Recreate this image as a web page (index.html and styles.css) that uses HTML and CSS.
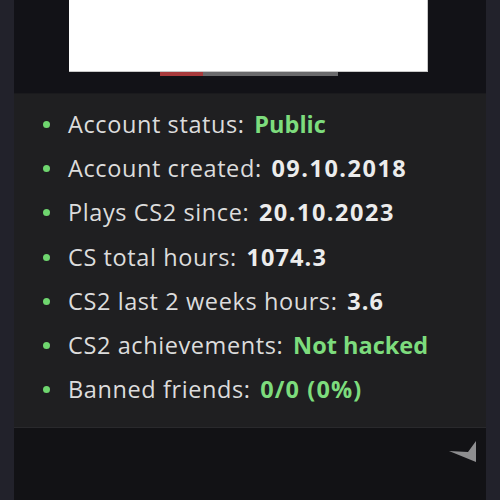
FILE: index.html
```html
<!DOCTYPE html>
<html>
<head>
<meta charset="utf-8">
<link rel="stylesheet" href="styles.css">
</head>
<body>
<div class="frame">
  <div class="top">
    <div class="shot"></div>
    <div class="progress"><span class="fill"></span></div>
  </div>
  <ul class="stats">
    <li><span class="label">Account status:</span> <b class="ok">Public</b></li>
    <li><span class="label">Account created:</span> <b class="date">09.10.2018</b></li>
    <li><span class="label">Plays CS2 since:</span> <b class="date">20.10.2023</b></li>
    <li><span class="label">CS total hours:</span> <b class="num">1074.3</b></li>
    <li><span class="label">CS2 last 2 weeks hours:</span> <b class="num">3.6</b></li>
    <li><span class="label">CS2 achievements:</span> <b class="ok">Not hacked</b></li>
    <li><span class="label">Banned friends:</span> <b class="ok num">0/0 (0%)</b></li>
  </ul>
  <div class="bottom">
    <svg class="corner" width="30" height="24" viewBox="0 0 30 24"><path d="M28 1 L28 22 L1 11 L20 12 Z" fill="#8e8e90"/></svg>
  </div>
</div>
</body>
</html>
```
FILE: styles.css
```css
html, body { margin: 0; padding: 0; }
body {
  width: 500px;
  height: 500px;
  background: #22222b;
  overflow: hidden;
  font-family: "Open Sans", "Noto Sans", sans-serif;
}
.frame {
  margin: 0 14px;
  height: 500px;
  display: flex;
  flex-direction: column;
}
.top {
  height: 93px;
  background: #121217;
  display: flex;
  flex-direction: column;
  padding-left: 55px;
  box-sizing: border-box;
}
.shot {
  width: 359px;
  height: 72px;
  background: #fff;
  border-right: 1px solid #c8c8c8;
  border-bottom: 1px solid #c8c8c8;
  box-sizing: border-box;
}
.progress {
  margin-left: 91px;
  width: 178px;
  height: 4px;
  background: #6b6b6d;
}
.fill {
  display: block;
  width: 43px;
  height: 4px;
  background: #a83a3c;
}
.stats {
  list-style: none;
  margin: 0;
  padding: 14px 0 0 29px;
  height: 334px;
  box-sizing: border-box;
  background: #1f1f21;
  border-top: 1px solid #1a1a1d;
}
.stats li {
  position: relative;
  padding-left: 25px;
  height: 44.2px;
  line-height: 32px;
  font-size: 23.5px;
  color: #dcdcdc;
  letter-spacing: 0.6px;
}
.stats li::before {
  content: "";
  position: absolute;
  left: 0;
  top: 13px;
  width: 7px;
  height: 7px;
  border-radius: 50%;
  background: #6fd66f;
}
.label { margin-right: 3px; }
.stats b { color: #ececec; font-weight: 700; letter-spacing: 0; }
.stats b.num { letter-spacing: 1.1px; }
.stats b.date { letter-spacing: 1.5px; }
.stats b.ok { color: #7ddc7d; }
.bottom {
  flex: 1;
  background: #121215;
  border-top: 1px solid #29292c;
  display: flex;
  justify-content: flex-end;
  align-items: flex-start;
  padding: 12px 8px 0 0;
}
```
